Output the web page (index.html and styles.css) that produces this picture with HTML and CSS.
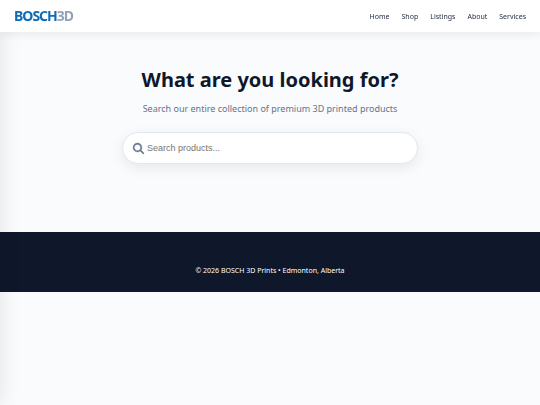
FILE: index.html
```html
<!DOCTYPE html>
<html lang="en">
<head>
<meta charset="utf-8">
<meta name="viewport" content="width=device-width, initial-scale=1">
<title>BOSCH3D</title>
<link rel="stylesheet" href="styles.css">
</head>
<body>
<div class="drawer-edge" aria-hidden="true"></div>
<header class="header">
  <a class="logo" href="#">BOSCH<span class="logo-suffix">3D</span></a>
  <nav class="nav">
    <a href="#">Home</a>
    <a href="#">Shop</a>
    <a href="#">Listings</a>
    <a href="#">About</a>
    <a href="#">Services</a>
  </nav>
</header>
<main class="search">
  <h1>What are you looking for?</h1>
  <p>Search our entire collection of premium 3D printed products</p>
  <form class="search-box" role="search">
    <svg class="search-icon" viewBox="0 0 512 512" aria-hidden="true"><path d="M416 208c0 45.900-14.900 88.300-40 122.700L502.600 457.400c12.500 12.500 12.500 32.800 0 45.300s-32.800 12.500-45.300 0L330.700 376c-34.400 25.200-76.800 40-122.700 40C93.100 416 0 322.900 0 208S93.100 0 208 0S416 93.100 416 208zM208 352a144 144 0 1 0 0-288 144 144 0 1 0 0 288z"/></svg>
    <input type="text" placeholder="Search products..." aria-label="Search products">
  </form>
</main>
<footer class="footer">© 2026 BOSCH 3D Prints • Edmonton, Alberta</footer>
</body>
</html>
```
FILE: styles.css
```css
* {
  box-sizing: border-box;
}

body {
  margin: 0;
  background: #f9fbfd;
  color: #0f172a;
  font-family: "Noto Sans", sans-serif;
}

a {
  color: inherit;
  text-decoration: none;
}

.drawer-edge {
  position: fixed;
  top: 0;
  bottom: 0;
  left: -120px;
  width: 120px;
  box-shadow: 0 0 20px rgba(0, 0, 0, 0.1);
}

.header {
  position: relative;
  display: flex;
  align-items: center;
  justify-content: space-between;
  height: 32px;
  padding: 0 14px;
  background: #fff;
  box-shadow: 0 2px 10px rgba(15, 23, 42, 0.08);
}

.logo {
  color: #0f6ab8;
  font-size: 14px;
  font-weight: 700;
  line-height: 20px;
  letter-spacing: -1px;
}

.logo-suffix {
  color: #94a3b8;
}

.nav {
  display: flex;
  gap: 12px;
  color: #1e293b;
  font-size: 7px;
}

.search {
  display: flex;
  flex-direction: column;
  align-items: center;
  padding: 34px 14px 68px;
}

h1 {
  margin: 0;
  font-size: 20px;
  font-weight: 700;
  line-height: 28px;
}

p {
  margin: 8px 0 16px;
  color: #64748b;
  font-size: 9px;
  line-height: 14px;
}

.search-box {
  display: flex;
  align-items: center;
  gap: 3px;
  width: 100%;
  max-width: 296px;
  height: 32px;
  padding: 0 10px;
  border: 1px solid #e2e8f0;
  border-radius: 16px;
  background: #fff;
  box-shadow: 0 4px 14px rgba(15, 23, 42, 0.08);
}

.search-icon {
  flex: none;
  width: 11px;
  height: 11px;
  fill: #64748b;
  stroke: #64748b;
  stroke-width: 16;
  overflow: visible;
}

.search-box input {
  flex: 1;
  min-width: 0;
  padding: 0;
  border: 0;
  outline: 0;
  background: none;
  font-family: "Liberation Sans", sans-serif;
  font-size: 9px;
}

.search-box input::placeholder {
  color: #757575;
}

.footer {
  padding: 34px 14px 16px;
  background: #0f172a;
  color: #fff;
  font-size: 7px;
  line-height: 10px;
  text-align: center;
}
```
